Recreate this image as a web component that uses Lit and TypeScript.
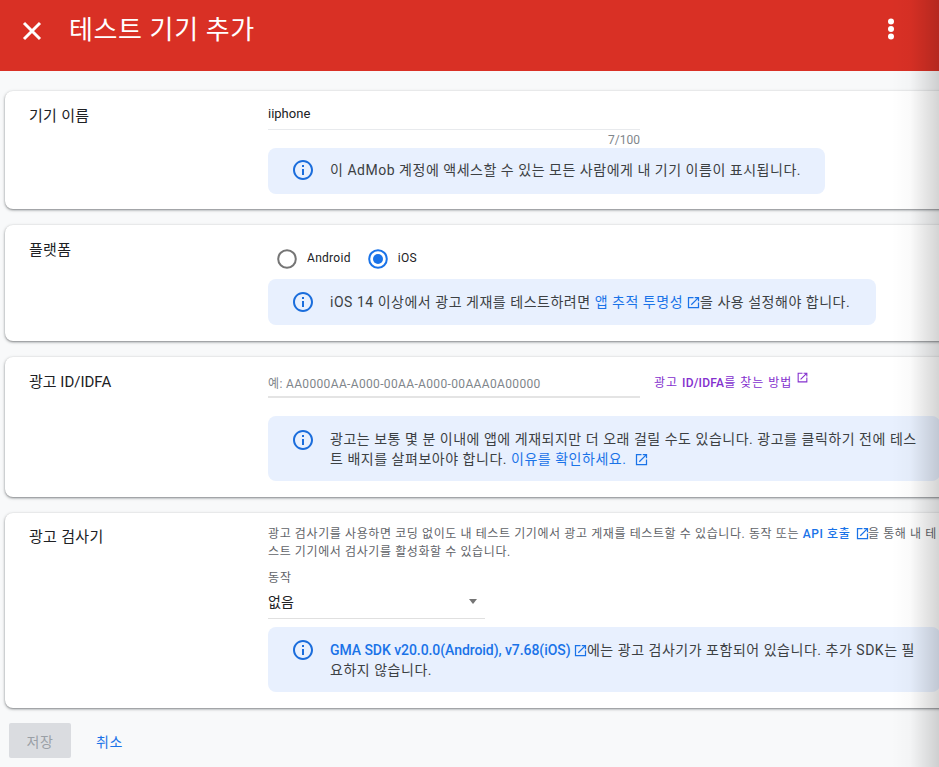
import { LitElement, html, css } from "lit";
import { customElement } from "lit/decorators.js";

const infoIcon = html`<svg class="info" viewBox="0 0 24 24" width="24" height="24"><path fill="#1a6ddc" d="M11 7h2v2h-2zm0 4h2v6h-2zm1-9C6.480 2 2 6.480 2 12s4.480 10 10 10 10-4.480 10-10S17.520 2 12 2zm0 18c-4.410 0-8-3.590-8-8s3.590-8 8-8 8 3.590 8 8-3.590 8-8 8z"/></svg>`;
const ext = (color = "#1a73e8") => html`<svg class="ext" viewBox="0 0 24 24" width="15" height="15"><path fill=${color} d="M19 19H5V5h7V3H3v18h18v-9h-2v7zM14 3v2h3.590l-9.830 9.830 1.410 1.410L19 6.410V10h2V3h-7z"/></svg>`;

@customElement("app-root")
export class AppRoot extends LitElement {
  static styles = css`
    :host {
      display: block;
      width: 939px;
      height: 767px;
      overflow: hidden;
      position: relative;
      background: #f8f9fa;
      font-family: Roboto, "Noto Sans CJK KR", sans-serif;
      color: #202124;
    }
    .header {
      height: 71px;
      background: #d93025;
      color: #fff;
      display: flex;
      align-items: flex-start;
    }
    .close { margin: 19px 0 0 20px; width: 24px; height: 24px; flex: none; }
    .title { margin: 10px 0 0 25px; font-size: 26px; line-height: 40px; flex: 1; letter-spacing: 0.6px; }
    .more { margin: 17px 36px 0 0; width: 24px; height: 24px; flex: none; }
    .page { width: 960px; padding: 20px 0 0 5px; display: flex; flex-direction: column; gap: 16px; }
    .card {
      background: #fff;
      border-radius: 8px;
      box-shadow: 0 1px 2px rgba(60,64,67,.5), 0 1px 3px 1px rgba(60,64,67,.15);
      display: grid;
      grid-template-columns: 239px 1fr;
      padding-left: 24px;
      box-sizing: border-box;
    }
    .c1 { height: 118px; }
    .c2 { height: 116px; }
    .c3 { height: 140px; }
    .c4 { height: 195px; }
    .label { font-size: 15px; line-height: 20px; padding-top: 15px; color: #202124; letter-spacing: 0.3px; }
    .c3 .label { letter-spacing: 0; }
    .c4 .label { padding-top: 14px; }
    .body { display: flex; flex-direction: column; align-items: flex-start; min-width: 0; }
    .value { font-size: 13px; line-height: 16px; padding-top: 15px; height: 23px; box-sizing: content-box; width: 372px; border-bottom: 1px solid #e8eaed; }
    .counter { width: 372px; text-align: right; font-size: 12px; line-height: 18px; color: #80868b; height: 17px; padding-top: 1px; }
    .note {
      background: #e8f0fe;
      border-radius: 8px;
      display: grid;
      grid-template-columns: 24px 1fr;
      column-gap: 15px;
      padding: 0 16px 0 23px;
      box-sizing: border-box;
      font-size: 14px;
      line-height: 20px;
      letter-spacing: 0.52px;
      color: #3c4043;
    }
    .note.full { width: 672px; }
    .note .info { margin-top: 10px; }
    .note .txt { padding-top: 12px; }
    .n1 { width: 557px; height: 46px; }
    .n2 { width: 608px; height: 46px; }
    .n2 .info { margin-top: 11px; }
    .n2 .txt { padding-top: 13px; }
    .n3, .n4 { height: 65px; }
    .n3 .info { margin-top: 12px; }
    .n3 .txt { padding-top: 13px; }
    .n4 .info { margin-top: 11px; }
    .n4 .txt { padding-top: 13px; }
    .a { color: #1a73e8; text-decoration: none; }
    .b { font-weight: 500; }
    .gma { letter-spacing: -0.06px; }
    .ext { vertical-align: -2.500px; margin: 0 -1px; }
    .why .ext { margin-left: 4px; }
    .api .ext { margin: 0 -2px 0 1px; }
    .radios { display: flex; align-items: center; box-sizing: border-box; height: 54px; padding: 14px 0 0 9px; font-size: 12px; letter-spacing: 0.3px; }
    .radio { display: flex; align-items: center; gap: 10px; margin-right: 17px; }
    .radio span { margin-top: -2px; }
    .circle { width: 20px; height: 20px; flex: none; }
    .idrow { display: flex; align-items: flex-start; height: 59px; }
    .idinput { width: 372px; box-sizing: border-box; height: 41px; padding-top: 18px; font-size: 12px; line-height: 18px; letter-spacing: 0.35px; color: #80868b; border-bottom: 2px solid #e4e4e4; }
    .howto { margin: 14px 0 0 14px; font-size: 12px; line-height: 18px; letter-spacing: 1px; color: #8430ce; }
    .howto .b { letter-spacing: 0.2px; }
    .howto .ext { width: 13px; height: 13px; vertical-align: 3px; margin-left: 0; }
    .desc { font-size: 12px; line-height: 18px; letter-spacing: 0.6px; color: #5f6368; padding-top: 12px; width: 672px; height: 58px; box-sizing: border-box; }
    .sellabel { font-size: 12px; letter-spacing: 1px; line-height: 16px; color: #5f6368; height: 17px; margin-top: -4px; padding-top: 3px; }
    .select { width: 217px; height: 32px; box-sizing: border-box; border-bottom: 1px solid #e0e0e0; display: flex; justify-content: space-between; align-items: center; font-size: 14px; color: #202124; padding: 0 8px 3px 0; margin-bottom: 8px; }
    .arrow { width: 0; height: 0; border-left: 4.500px solid transparent; border-right: 4.500px solid transparent; border-top: 5px solid #757575; }
    .actions { display: flex; align-items: center; padding: 15px 0 0 9px; }
    .save { width: 62px; height: 35px; background: #dadce0; color: #9aa0a6; border-radius: 2px; display: flex; align-items: center; justify-content: center; font-size: 14px; letter-spacing: 0.5px; }
    .cancel { color: #1a73e8; font-size: 14px; letter-spacing: 0.5px; margin-left: 25px; }
    .edge {
      position: absolute;
      top: 0;
      right: 0;
      bottom: 0;
      width: 48px;
      pointer-events: none;
      background: linear-gradient(to right, rgba(0,0,0,0), rgba(0,0,0,.02) 40%, rgba(0,0,0,.17));
    }
  `;

  render() {
    return html`
      <div class="header">
        <svg class="close" viewBox="0 0 24 24"><path d="M4 4l16 16M20 4L4 20" stroke="#fff" stroke-width="3" fill="none"/></svg>
        <div class="title">테스트 기기 추가</div>
        <svg class="more" viewBox="0 0 24 24"><circle cx="12" cy="4.500" r="3" fill="#fff"/><circle cx="12" cy="12" r="3" fill="#fff"/><circle cx="12" cy="19.500" r="3" fill="#fff"/></svg>
      </div>
      <div class="page">
        <section class="card c1">
          <div class="label">기기 이름</div>
          <div class="body">
            <div class="value">iiphone</div>
            <div class="counter">7/100</div>
            <div class="note n1">${infoIcon}<div class="txt">이 AdMob 계정에 액세스할 수 있는 모든 사람에게 내 기기 이름이 표시됩니다.</div></div>
          </div>
        </section>
        <section class="card c2">
          <div class="label">플랫폼</div>
          <div class="body">
            <div class="radios">
              <div class="radio">
                <svg class="circle" viewBox="0 0 20 20"><circle cx="10" cy="10" r="8.800" fill="none" stroke="#757575" stroke-width="2"/></svg>
                <span>Android</span>
              </div>
              <div class="radio">
                <svg class="circle" viewBox="0 0 20 20"><circle cx="10" cy="10" r="8.800" fill="none" stroke="#1a73e8" stroke-width="2"/><circle cx="10" cy="10" r="5" fill="#1a73e8"/></svg>
                <span>iOS</span>
              </div>
            </div>
            <div class="note n2">${infoIcon}<div class="txt">iOS 14 이상에서 광고 게재를 테스트하려면 <a class="a">앱 추적 투명성 ${ext()}</a>을 사용 설정해야 합니다.</div></div>
          </div>
        </section>
        <section class="card c3">
          <div class="label">광고 ID/IDFA</div>
          <div class="body">
            <div class="idrow">
              <div class="idinput">예: AA0000AA-A000-00AA-A000-00AAA0A00000</div>
              <div class="howto">광고 <span class="b">ID/IDFA</span>를 찾는 방법 ${ext("#8430ce")}</div>
            </div>
            <div class="note full n3">${infoIcon}<div class="txt">광고는 보통 몇 분 이내에 앱에 게재되지만 더 오래 걸릴 수도 있습니다. 광고를 클릭하기 전에 테스트 배지를 살펴보아야 합니다. <a class="a why">이유를 확인하세요. ${ext()}</a></div></div>
          </div>
        </section>
        <section class="card c4">
          <div class="label">광고 검사기</div>
          <div class="body">
            <div class="desc">광고 검사기를 사용하면 코딩 없이도 내 테스트 기기에서 광고 게재를 테스트할 수 있습니다. 동작 또는 <a class="a b api">API 호출 ${ext()}</a>을 통해 내 테스트 기기에서 검사기를 활성화할 수 있습니다.</div>
            <div class="sellabel">동작</div>
            <div class="select"><span>없음</span><span class="arrow"></span></div>
            <div class="note full n4">${infoIcon}<div class="txt"><a class="a b gma">GMA SDK v20.0.0(Android), v7.68(iOS) ${ext()}</a>에는 광고 검사기가 포함되어 있습니다. 추가 SDK는 필요하지 않습니다.</div></div>
          </div>
        </section>
      </div>
      <div class="actions">
        <div class="save">저장</div>
        <div class="cancel">취소</div>
      </div>
      <div class="edge"></div>
    `;
  }
}
